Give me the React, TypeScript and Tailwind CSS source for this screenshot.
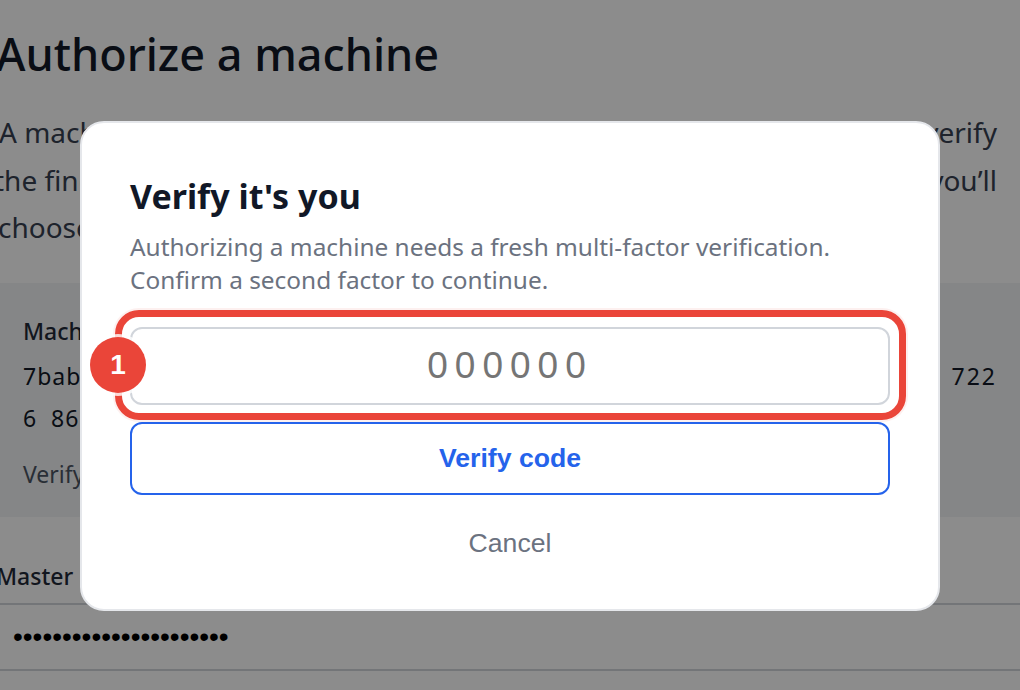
const segoe = "font-['Noto_Sans','Open_Sans',sans-serif]"

// Page behind the dialog, cropped at the left edge
function MachinePage() {
  return (
    <div className={`h-[690px] overflow-hidden bg-white text-[#111827] ${segoe}`}>
      <div className="pt-[22px]">
        <h1 className="-ml-[4px] text-[45px] leading-[64px] font-medium whitespace-nowrap">Authorize a machine</h1>
        <div className="mt-[23px] pr-[23px] text-[#374151] text-[28px] leading-[47.5px]">
          <div className="flex justify-between -ml-[1px]">
            <span>A machine is requesting access</span>
            <span>verify</span>
          </div>
          <div className="flex justify-between -ml-[6px]">
            <span>the fingerprint shown</span>
            <span>you’ll</span>
          </div>
          <div className="-ml-[2px]">choose</div>
        </div>
      </div>
      <div className="mt-[31px] h-[234px] bg-[#f3f4f6] px-[23px] pt-[32px]">
        <div className="text-[23px] leading-[32px] font-medium text-[#1f2937]">Machine</div>
        <div className="mt-[13px] flex justify-between text-[23px] leading-[32px] tracking-[1px]">
          <span>7bab</span>
          <span className="tracking-[2px]">722</span>
        </div>
        <div className="mt-[10px] text-[23px] leading-[32px] tracking-[1px] whitespace-pre">6  86</div>
        <div className="mt-[24px] text-[23px] leading-[32px] text-[#4b5563]">Verify</div>
      </div>
      <div className="pt-[43px] -ml-[4px] text-[23px] leading-[32px] font-medium text-[#1f2937]">Master</div>
      <div className="mt-[11px] flex h-[68px] items-center border-y-2 border-[#d1d5db] pl-[13px] text-[28px] text-black font-['Liberation_Sans',sans-serif]">
        ••••••••••••••••••••••
      </div>
    </div>
  )
}

export default function App() {
  return (
    <div className="relative h-[690px] w-[1020px] overflow-hidden">
      <MachinePage />

      {/* Backdrop */}
      <div className="absolute inset-0 flex items-start justify-center bg-black/45 pt-[121px]">
        <div className={`w-[860px] h-[490px] rounded-[24px] border-2 border-[#e5e7eb] bg-white px-[48px] pt-[48px] ${segoe}`}>
          <h2 className="text-[34px] leading-[50px] font-bold text-[#111827]">Verify it's you</h2>
          <p className="mt-[9px] text-[24.4px] leading-[33px] text-[#6b7280]">
            Authorizing a machine needs a fresh multi-factor verification.
            <br />
            Confirm a second factor to continue.
          </p>

          <div className="relative mt-[31px]">
            <div className="flex h-[78px] items-center justify-center rounded-[12px] border-2 border-[#d1d5db] text-[37px] tracking-[7px] text-[#757575] font-['Liberation_Sans',sans-serif]">
              000000
            </div>
            {/* Callout ring */}
            <div className="absolute -left-[15px] -right-[16px] -top-[17px] -bottom-[15px] rounded-[24px] border-[7px] border-[#ea4539] shadow-[0_0_0_2px_rgba(234,69,57,0.08)]" />
            <div className="absolute -left-[40px] top-[10px] flex h-[56px] w-[56px] items-center justify-center rounded-full bg-[#ea4539] text-[28px] font-bold text-white shadow-[0_0_0_3px_rgba(255,255,255,0.8)] font-['Liberation_Sans',sans-serif]">
              1
            </div>
          </div>

          <button className="mt-[17px] flex h-[73px] w-full items-center justify-center rounded-[12px] border-2 border-[#2563eb] text-[26.6px] font-bold text-[#2563eb] font-['Liberation_Sans',sans-serif]">
            Verify code
          </button>
          <button className="mt-[13px] flex h-[72px] w-full items-center justify-center text-[26.6px] text-[#6b7280] font-['Liberation_Sans',sans-serif]">
            Cancel
          </button>
        </div>
      </div>
    </div>
  )
}
